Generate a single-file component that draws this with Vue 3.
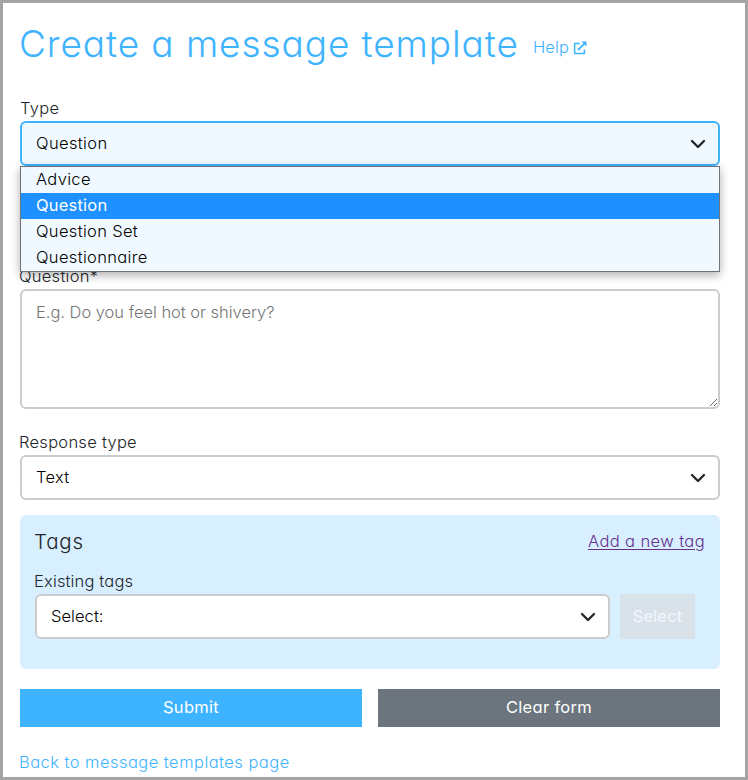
<script setup>
import { reactive, ref } from 'vue'

const types = ['Advice', 'Question', 'Question Set', 'Questionnaire']
const menuOpen = ref(true)

const form = reactive({
  type: 'Question',
  question: '',
  responseType: 'Text',
  tag: '',
})

const chooseType = (type) => {
  form.type = type
  menuOpen.value = false
}

const clearForm = () => {
  form.type = 'Question'
  form.question = ''
  form.responseType = 'Text'
  form.tag = ''
}
</script>

<template>
  <main class="page">
    <header class="heading">
      <h1>Create a message template</h1>
      <a class="help" href="#">
        <span>Help</span>
        <svg viewBox="0 0 14 14" width="14" height="14" fill="none" stroke="currentColor">
          <path d="M6.8 2.6H1.6V12.4H11.4V8.4" stroke-width="1.5" stroke-linejoin="round" />
          <path d="M5 9L11.4 2.6" stroke-width="1.8" />
          <path d="M8.4 .5H13.5V5.6Z" fill="currentColor" stroke="none" />
        </svg>
      </a>
    </header>

    <form @submit.prevent>
      <label class="label type-label">Type</label>
      <div class="type-field">
        <button type="button" class="control active" @click="menuOpen = !menuOpen">
          <span class="type-value">{{ form.type }}</span>
          <svg class="chevron" viewBox="0 0 16 16" width="16" height="16">
            <path d="M2 5l6 6 6-6" />
          </svg>
        </button>
        <ul v-if="menuOpen" class="menu">
          <li
            v-for="type in types"
            :key="type"
            :class="{ selected: type === form.type }"
            @click="chooseType(type)"
          >
            {{ type }}
          </li>
        </ul>
      </div>

      <label class="label question-label" for="question">Question*</label>
      <textarea id="question" v-model="form.question" placeholder="E.g. Do you feel hot or shivery?"></textarea>

      <label class="label response-label">Response type</label>
      <div class="control">
        <span class="text-value">{{ form.responseType }}</span>
        <svg class="chevron" viewBox="0 0 16 16" width="16" height="16">
          <path d="M2 5l6 6 6-6" />
        </svg>
      </div>

      <section class="tags">
        <div class="tags-head">
          <h2>Tags</h2>
          <a href="#">Add a new tag</a>
        </div>
        <label class="label existing-label">Existing tags</label>
        <div class="tags-row">
          <div class="control">
            <span class="select-value">{{ form.tag || 'Select:' }}</span>
            <svg class="chevron" viewBox="0 0 16 16" width="16" height="16">
              <path d="M2 5l6 6 6-6" />
            </svg>
          </div>
          <button type="button" class="select-button" disabled>Select</button>
        </div>
      </section>

      <div class="actions">
        <button type="submit" class="submit">Submit</button>
        <button type="button" class="clear" @click="clearForm">Clear form</button>
      </div>
    </form>

    <a class="back" href="#">Back to message templates page</a>
  </main>
</template>

<style>
body {
  margin: 0;
  background: #fff;
}
</style>

<style scoped>
* {
  box-sizing: border-box;
}

.page {
  height: 780px;
  padding: 0 25px 0 17px;
  border: 3px solid #a4a4a4;
  overflow: hidden;
  background: #fff;
  color: #212529;
  font-family: Inter, 'Open Sans', sans-serif;
  font-size: 16.5px;
  font-weight: 300;
  line-height: 24px;
  /* single-storey a */
  font-feature-settings: 'cv11';
  letter-spacing: 0.27px;
}

button,
textarea {
  font: inherit;
  font-feature-settings: inherit;
  letter-spacing: inherit;
}

.heading {
  display: flex;
  height: 93px;
  padding-top: 17px;
  color: #3eb3ff;
}

h1 {
  width: 498px;
  margin: 0;
  font-size: 37px;
  font-weight: 300;
  font-optical-sizing: none;
  line-height: 48px;
  white-space: nowrap;
  letter-spacing: 0.92px;
  text-indent: -1px;
}

.help {
  display: flex;
  align-items: center;
  gap: 4px;
  height: 24px;
  margin: 15px 0 0 15px;
  color: #3eb3ff;
  letter-spacing: 0.1px;
  text-decoration: none;
}

.help svg {
  margin-top: 2px;
}

.label {
  display: block;
  height: 25px;
}

.question-label,
.response-label,
.existing-label {
  text-indent: -1px;
}

.type-field {
  position: relative;
}

.control {
  display: flex;
  align-items: center;
  justify-content: space-between;
  width: 100%;
  height: 45px;
  padding: 0 12px 0 14px;
  border: 2px solid #ccc;
  border-radius: 6px;
  background: #fff;
  color: #000;
}

.control span {
  padding-bottom: 2px;
}

.type-value {
  letter-spacing: 0.37px;
}

.control.active {
  border-color: #3eb3ff;
  background: #f0f9ff;
}

.chevron {
  fill: none;
  stroke: #212529;
  stroke-width: 2.3;
  stroke-linecap: round;
  stroke-linejoin: round;
}

.menu {
  position: absolute;
  top: 45px;
  left: 0;
  z-index: 1;
  width: 100%;
  margin: 0;
  padding: 0;
  border: 1px solid #6f7377;
  background: #f0f9ff;
  color: #000;
  list-style: none;
  letter-spacing: 0.33px;
  box-shadow: 0 3px 9px rgba(0, 0, 0, 0.32);
}

.menu li {
  height: 26px;
  padding-left: 15px;
  line-height: 24px;
}

.menu .selected {
  background: #1e90ff;
  color: #fff;
  font-weight: 400;
  letter-spacing: 0.2px;
}

.question-label {
  margin-top: 98px;
}

textarea {
  display: block;
  width: 100%;
  height: 120px;
  padding: 9px 14px;
  border: 2px solid #ccc;
  border-radius: 6px;
  background: #fff;
  letter-spacing: -0.03px;
  resize: vertical;
}

textarea::placeholder {
  color: #757575;
}

.response-label {
  margin-top: 21px;
}

.tags {
  height: 154px;
  margin-top: 15px;
  padding: 12px 15px 0;
  border-radius: 6px;
  background: #d8efff;
}

.tags-head {
  display: flex;
  justify-content: space-between;
  height: 42px;
}

.tags-head a {
  height: 24px;
  margin-top: 2px;
  color: #66308f;
  letter-spacing: 0.4px;
  text-underline-offset: 2px;
}

h2 {
  margin: 0 0 0 -1px;
  font-size: 20.5px;
  font-weight: 300;
  line-height: 30px;
  letter-spacing: 0.8px;
}

.existing-label {
  letter-spacing: 0.15px;
}

.tags-row {
  display: flex;
  gap: 10px;
}

.tags-row .control {
  width: 575px;
}

.select-value {
  letter-spacing: 0.05px;
}

.select-button {
  width: 75px;
  height: 45px;
  padding: 0 0 2px;
  border: 0;
  background: #dae2e9;
  color: #f0f7ff;
  font-weight: 400;
  letter-spacing: 0.15px;
}

.actions {
  display: flex;
  gap: 16px;
  margin-top: 20px;
}

.actions button {
  flex: 1;
  height: 38px;
  padding: 0 0 2px;
  border: 0;
  color: #fff;
  font-weight: 400;
  letter-spacing: 0.3px;
}

.actions .submit {
  background: #3eb3ff;
}

.actions .clear {
  background: #6c757d;
}

.back {
  display: block;
  margin-top: 23px;
  color: #3eb3ff;
  letter-spacing: 0.46px;
  text-decoration: none;
  text-indent: -1px;
}
</style>
